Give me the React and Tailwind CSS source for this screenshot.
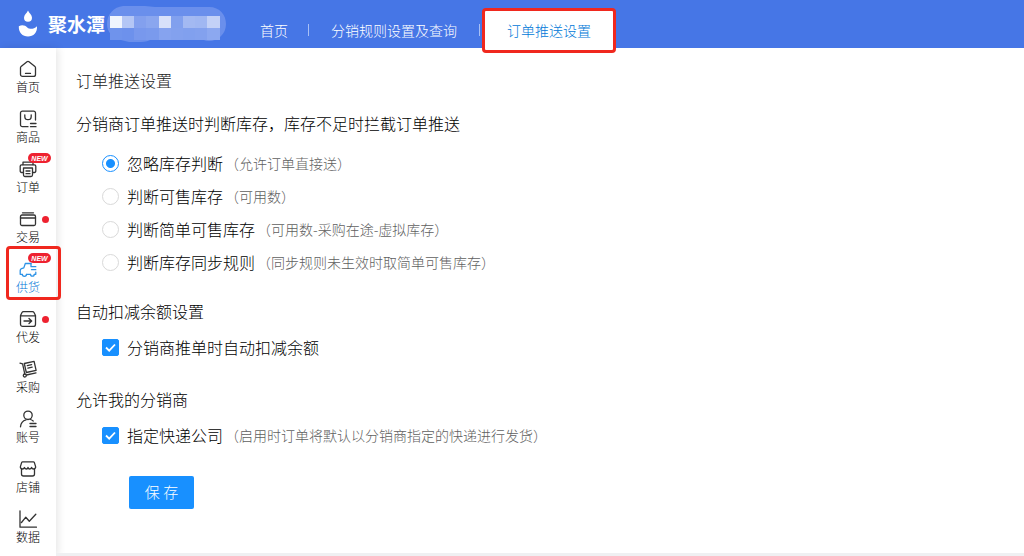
import React from "react";

const icons = {
  home: (
    <>
      <path d="M1.500 7.800a1.500 1.500 0 0 1 .6-1.200L8 1.700a1.600 1.600 0 0 1 2 0l5.900 4.900a1.500 1.500 0 0 1 .6 1.200v6.600a2 2 0 0 1-2 2h-11a2 2 0 0 1-2-2z" />
      <path d="M6.500 13.400h5" />
    </>
  ),
  goods: (
    <>
      <path d="M16.500 10V3a1.900 1.900 0 0 0-1.900-1.900H3.400A1.900 1.900 0 0 0 1.500 3v11.800a1.900 1.900 0 0 0 1.900 1.900H9" />
      <path d="M5.800 4.800v1.700a3.200 3.200 0 0 0 6.400 0V4.800M11.500 13.500h5.500M11.500 16.700h5.500" />
    </>
  ),
  order: (
    <>
      <path d="M4 5V2.200h10V5M4 12.500H2.600A1.400 1.400 0 0 1 1.200 11V6.200A1.400 1.400 0 0 1 2.600 4.800h12.800a1.400 1.400 0 0 1 1.400 1.400V11a1.400 1.400 0 0 1-1.400 1.500H14" />
      <path d="M4.500 8h9v7a1.500 1.500 0 0 1-1.500 1.500H6A1.500 1.500 0 0 1 4.500 15zM7 11h4M7 13.700h4" />
    </>
  ),
  trade: (
    <>
      <path d="M3.500 2.800h11" />
      <rect x="1.500" y="5" width="15" height="10.500" rx="1.500" />
      <path d="M1.500 8h15" />
    </>
  ),
  supply: (
    <>
      <path d="M12 3.500H6.300L4.800 7.900 2.500 8.700a1.900 1.900 0 0 0-1.300 1.800v3.800h2.100" />
      <path d="M12 3.500v3.200h4.800M12.500 9.700h4.300M16.800 12.200v2.100h-1.500M7.500 14.300h4" />
      <path d="M3.300 14.300a2.100 2.100 0 0 0 4.200 0M11.500 14.300a1.900 1.900 0 0 0 3.800 0" />
    </>
  ),
  ship: (
    <>
      <path d="M1.500 5.500 3 2.500a1.800 1.800 0 0 1 1.500-.900h9a1.800 1.800 0 0 1 1.500.900l1.500 3v8.700a2.200 2.200 0 0 1-2.200 2.200H3.700a2.200 2.200 0 0 1-2.200-2.200zM1.500 5.800h15" />
      <path d="M5 11h7.500M10 8.500l2.700 2.500-2.700 2.500" />
    </>
  ),
  purchase: (
    <>
      <path d="M1 3.200l2.600.6 2.200 10.400M7.500 15l9.500-2.200" />
      <path d="M5.300 3.500l9.800-2.200 2 9-9.800 2.200zM8.300 5.700l4.300-1M8.900 8.200l4.300-1" />
      <circle cx="5.800" cy="15.500" r="1.500" />
    </>
  ),
  account: (
    <>
      <circle cx="9" cy="5.300" r="4.200" />
      <path d="M1.500 16.800c.3-4 2.500-6.200 5.500-7M11.500 9.500c1 .3 1.900.8 2.700 1.500M11 13.500h6M11 16.500h6" />
    </>
  ),
  shop: (
    <>
      <path d="M2.500 9v5a2 2 0 0 0 2 2h9a2 2 0 0 0 2-2V9" />
      <path d="M3.600 1.800h10.800a1 1 0 0 1 .9.600l1.300 4.200c.3 1.300-.8 2.400-2 2.400-1 0-1.800-.6-2-1.500-.4.900-1.200 1.500-2 1.500S9.200 8.400 9 7.500C8.800 8.400 8.200 9 7.400 9s-1.600-.6-2-1.500C5.200 8.400 4.400 9 3.400 9c-1.200 0-2.300-1.100-2-2.400l1.300-4.200a1 1 0 0 1 .9-.6z" />
    </>
  ),
  data: <path d="M1 .8v16.400h16.500M2.500 12.500l4.300-5.300 3.500 4 6.500-7" />,
};

const menu = [
  { id: "home", label: "首页" },
  { id: "goods", label: "商品" },
  { id: "order", label: "订单", badge: "new" },
  { id: "trade", label: "交易", badge: "dot" },
  { id: "supply", label: "供货", badge: "new", active: true },
  { id: "ship", label: "代发", badge: "dot" },
  { id: "purchase", label: "采购" },
  { id: "account", label: "账号" },
  { id: "shop", label: "店铺" },
  { id: "data", label: "数据" },
];

const stockRules = [
  { id: "ignore", label: "忽略库存判断", hint: "（允许订单直接送）", checked: true },
  { id: "available", label: "判断可售库存", hint: "（可用数）" },
  { id: "simple", label: "判断简单可售库存", hint: "（可用数-采购在途-虚拟库存）" },
  { id: "sync", label: "判断库存同步规则", hint: "（同步规则未生效时取简单可售库存）" },
];

function Logo() {
  return (
    <svg className="h-8 w-6 shrink-0" viewBox="0 0 24 32" fill="#fff" aria-hidden="true">
      <path d="M12 2.500c1.200 2.800 4 4.400 4 7.200a4 4 0 0 1-8 0c0-2.800 2.800-4.400 4-7.200z" />
      <path d="M2.800 18.200c3.700-1.800 6.400-.6 8.500 1.200 2.600 2.200 6.200 2 9.700-1.200.5 6.200-3.500 10.300-9 10.300s-9.500-4.100-9.200-10.300z" />
    </svg>
  );
}

const mosaic = [
  [0, 0, "#f0f4fd"], [12, 0, "#b4c6f5"], [24, 0, "#83a0ee"], [36, 0, "#8aa6ef"], [49, 0, "#d8e1fa"], [61, 0, "#81a0ee"], [73, 0, "#a3b9f2"], [85, 0, "#a0b7f2"], [97, 0, "#c3d1f7"],
  [0, 12, "#6f93ec"], [12, 12, "#6d91ec"], [24, 12, "#7898ed"], [36, 12, "#7a9aed"], [49, 12, "#86a3ef"], [61, 12, "#83a1ee"], [73, 12, "#81a0ee"], [85, 12, "#83a1ee"], [97, 12, "#8ca8f0"],
];

function MaskedName() {
  return (
    <svg className="ml-0.5 h-9 w-[120px] shrink-0" viewBox="0 0 120 36" aria-hidden="true">
      <path d="M16 0h22l10 1h54c11 0 17 8 17 17 0 10-8 17-17 17-4 0-7-2-9-2H45c-3 2-7 3-11 3H22l-8-2C5 31 0 26 0 18 0 8 7 1 16 0z" fill="#6a8fec" />
      {mosaic.map(([x, y, fill]) => (
        <rect key={`${x}-${y}`} x={x + 3} y={y + 10} width={x === 36 || x === 97 ? 13 : 12} height="12" fill={fill} />
      ))}
    </svg>
  );
}

function CheckRow({ id, label, hint }) {
  return (
    <div className="ml-[26px] flex h-6 items-center">
      <span className="grid shrink-0 place-items-center">
        <input id={id} type="checkbox" defaultChecked className="peer col-start-1 row-start-1 size-[17px] appearance-none rounded-xs border border-gray-300 bg-white checked:border-[#1890ff] checked:bg-[#1890ff]" />
        <svg className="pointer-events-none invisible col-start-1 row-start-1 size-[17px] peer-checked:visible" viewBox="0 0 17 17" fill="none" stroke="#fff" strokeWidth="1.800" aria-hidden="true">
          <path d="M4 8.500l3.200 3.200 5.800-6.200" />
        </svg>
      </span>
      <label htmlFor={id} className="ml-2 flex items-center">
        {label}
        {hint && <span className="ml-0.5 text-sm text-[#606060]">{hint}</span>}
      </label>
    </div>
  );
}

export default function App() {
  return (
    <div className="flex h-screen flex-col overflow-hidden bg-white font-['Noto_Sans_CJK_SC',sans-serif] text-base font-light text-black">
      <header className="flex h-12 shrink-0 bg-[#4676e6] pl-4 text-white">
        <div className="flex h-12 items-center">
          <Logo />
          <span className="ml-2 text-[19px] font-bold">聚水潭</span>
          <MaskedName />
        </div>
        <nav className="ml-[33px] flex h-12 items-center pt-3 text-sm">
          <a href="#home">首页</a>
          <span className="mr-[22px] ml-5 h-3 w-px bg-[#a9c0f5]" />
          <a href="#rules">分销规则设置及查询</a>
          <span className="mr-0.5 ml-[22px] h-3 w-px bg-[#a9c0f5]" />
        </nav>
        <a href="#push" className="z-10 mt-2 flex h-[45px] w-[134px] items-center justify-center rounded-sm border-[3px] border-[#f0281e] bg-white pb-0.5 text-sm text-[#0078d8]">
          订单推送设置
        </a>
      </header>

      <div className="flex min-h-0 flex-1">
        <aside className="w-14 shrink-0 pt-2 shadow-[2px_0_8px_rgba(0,0,0,0.1)]">
          <ul>
            {menu.map((item) => (
              <li key={item.id} className="relative h-[50px]">
                <a href={`#${item.id}`} className={`flex flex-col items-center gap-px pt-1 text-xs ${item.active ? "text-[#0078d8]" : "text-black"}`}>
                  <svg className={`size-[18px] ${item.active ? "text-[#2e93e6]" : "text-[#333]"}`} viewBox="0 0 18 18" fill="none" stroke="currentColor" strokeWidth="1.300" strokeLinecap="round" strokeLinejoin="round" aria-hidden="true">
                    {icons[item.id]}
                  </svg>
                  <span>{item.label}</span>
                </a>
                {item.badge === "new" && (
                  <span className="absolute -top-[3px] right-[5px] flex h-[10px] w-[23px] items-center justify-center rounded-full bg-[#ee2230] font-['Liberation_Sans',sans-serif] text-[7px] leading-none font-bold text-white italic">NEW</span>
                )}
                {item.badge === "dot" && <span className="absolute top-[10px] right-[7px] size-[7px] rounded-full bg-[#ee2230]" />}
                {item.active && <span className="pointer-events-none absolute -top-[10px] -right-[5px] left-[6px] z-10 h-[54px] rounded-sm border-[3px] border-[#f0281e]" />}
              </li>
            ))}
          </ul>
        </aside>

        <main className="flex-1 border-b-[3px] border-[#eff0f2] pt-5 pl-5">
          <h1 className="leading-6 text-[#222]">订单推送设置</h1>
          <form onSubmit={(e) => e.preventDefault()}>
            <fieldset className="mt-[19px]">
              <legend className="leading-6">分销商订单推送时判断库存，库存不足时拦截订单推送</legend>
              <div className="mt-4 ml-[26px] flex flex-col gap-[9px]">
                {stockRules.map((rule) => (
                  <div key={rule.id} className="flex h-6 items-center">
                    <input id={rule.id} type="radio" name="stock" defaultChecked={rule.checked} className="size-[17px] shrink-0 appearance-none rounded-full border border-[#d9d9d9] bg-white checked:border-[#1890ff] checked:bg-[radial-gradient(circle,#1890ff_4px,transparent_5px)]" />
                    <label htmlFor={rule.id} className="ml-2 flex items-center">
                      {rule.label}
                      <span className="ml-0.5 text-sm text-[#606060]">{rule.hint}</span>
                    </label>
                  </div>
                ))}
              </div>
            </fieldset>
            <h2 className="mt-[25px] mb-3 leading-6">自动扣减余额设置</h2>
            <CheckRow id="deduct" label="分销商推单时自动扣减余额" />
            <h2 className="mt-7 mb-3 leading-6">允许我的分销商</h2>
            <CheckRow id="express" label="指定快递公司" hint="（启用时订单将默认以分销商指定的快递进行发货）" />
            <button type="submit" className="mt-[29px] ml-[53px] h-[33px] w-[65px] rounded-xs bg-[#1890ff] text-[15px] text-white">
              保 存
            </button>
          </form>
        </main>
      </div>
    </div>
  );
}
